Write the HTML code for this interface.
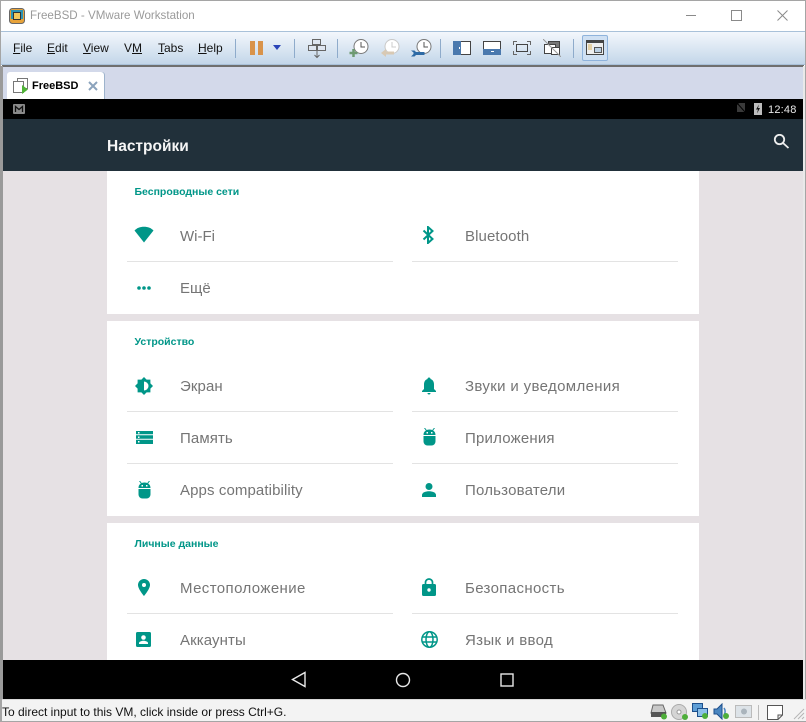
<!DOCTYPE html>
<html><head><meta charset="utf-8"><style>
html,body{margin:0;padding:0;background:#fff}
#r{position:relative;width:806px;height:722px;overflow:hidden;background:#fff;font-family:"Liberation Sans",sans-serif}
#r div,#r svg,#r span.a{position:absolute}
.m{top:41px;font-size:12px;color:#111;line-height:14px;white-space:nowrap}
.m u{text-decoration:underline}
.s{top:39px;width:1px;height:19px;background:#8eabcb}
.h{left:134.5px;font-size:10.5px;font-weight:bold;color:#009688;line-height:14px;white-space:nowrap;letter-spacing:0}
.t{font-size:15px;color:#757575;line-height:18px;white-space:nowrap;letter-spacing:.35px}
.l{height:1px;background:#e3e3e3}
.c{background:#fff;left:107px;width:592px}
</style></head><body><div id="r">
<!-- window frame -->
<div style="left:0;top:0;width:806px;height:1px;background:#a5a5a5"></div>
<div style="left:0;top:0;width:1px;height:722px;background:#a5a5a5"></div>
<div style="right:0;top:0;width:1px;height:722px;background:#a5a5a5"></div>

<!-- title bar -->
<svg style="left:9px;top:8px" width="16" height="16" viewBox="0 0 16 16"><rect x="0.5" y="0.5" width="15" height="15" rx="3" fill="#e8a33a" stroke="#666"/><path d="M2 2h12v9H2z" fill="#2b93b5"/><rect x="4.500" y="4.500" width="7" height="7" fill="#f2c75c" stroke="#333"/></svg>
<div style="left:30px;top:8px;font-size:11.600px;line-height:16px;color:#9a9a9a;white-space:nowrap">FreeBSD - VMware Workstation</div>
<div style="left:686px;top:15px;width:10px;height:1px;background:#8a8a8a"></div>
<div style="left:731px;top:10px;width:9px;height:9px;border:1px solid #8a8a8a"></div>
<svg style="left:777px;top:10px" width="11" height="11" viewBox="0 0 11 11"><path d="M.5.500l10 10M10.500.500l-10 10" stroke="#8a8a8a" stroke-width="1" fill="none"/></svg>

<!-- toolbar -->
<div style="left:1px;top:31px;width:804px;height:1px;background:#a9c1d9"></div>
<div style="left:1px;top:32px;width:804px;height:32px;background:linear-gradient(#f3f7fc,#c3d6e9)"></div>
<div style="left:1px;top:64px;width:804px;height:1px;background:#a9c1d9"></div>
<div style="left:2px;top:65px;width:802px;height:2px;background:#6f6f6f"></div>
<div class="m" style="left:13px"><u>F</u>ile</div>
<div class="m" style="left:47px"><u>E</u>dit</div>
<div class="m" style="left:83px"><u>V</u>iew</div>
<div class="m" style="left:124px">V<u>M</u></div>
<div class="m" style="left:158px"><u>T</u>abs</div>
<div class="m" style="left:198px"><u>H</u>elp</div>
<div class="s" style="left:235px"></div>
<div style="left:250px;top:41px;width:5px;height:14px;background:#d9934a"></div>
<div style="left:258px;top:41px;width:5px;height:14px;background:#d9934a"></div>
<svg style="left:273px;top:45px" width="9" height="6"><path d="M0 0h8L4 5z" fill="#2a44b8"/></svg>
<div class="s" style="left:294px"></div>
<svg style="left:307px;top:38px" width="20" height="21" viewBox="0 0 20 21" fill="#dfe6f0" stroke="#666"><rect x="5.500" y="1.500" width="8" height="5"/><rect x="1.500" y="7.500" width="8" height="5"/><rect x="10.500" y="7.500" width="8" height="5"/><path d="M10 13v6M7.500 17l2.500 2.500 2.500-2.500" fill="none"/></svg>
<div class="s" style="left:337px"></div>
<svg style="left:349px;top:38px" width="22" height="20" viewBox="0 0 22 20"><circle cx="12" cy="8.500" r="7" fill="#fff" stroke="#777"/><path d="M12 4v5h4" fill="none" stroke="#555"/><path d="M4.500 11v8M.5 15h8" stroke="#6d9a72" stroke-width="2.500"/></svg>
<svg style="left:380px;top:38px" width="22" height="20" viewBox="0 0 22 20"><circle cx="12" cy="8.500" r="7" fill="#fff" stroke="#c8c8c8"/><path d="M12 4v5h4" fill="none" stroke="#ccc"/><path d="M1 15l5-4v2.500h8v3H6V19z" fill="#d8c9b4"/></svg>
<svg style="left:411px;top:38px" width="23" height="20" viewBox="0 0 23 20"><circle cx="13" cy="8.500" r="7" fill="#fff" stroke="#777"/><path d="M13 4v5h4" fill="none" stroke="#555"/><path d="M0 12.500h3.500l1.500 1.500h8.500v3H5l-1.500 1.500H0l2.500-2.500v-1.500z" fill="#2d6aa5"/></svg>
<div class="s" style="left:440px"></div>
<svg style="left:453px;top:41px" width="18" height="14"><rect x=".5" y=".5" width="17" height="13" fill="#fff" stroke="#444"/><rect width="8" height="14" fill="#4a79ae"/><rect x="6" y="6" width="1" height="2" fill="#fff"/></svg>
<svg style="left:483px;top:41px" width="18" height="14"><rect x=".5" y=".5" width="17" height="13" fill="#fff" stroke="#444"/><rect y="8" width="18" height="6" fill="#4a79ae"/><rect x="8" y="10" width="3" height="1" fill="#fff"/></svg>
<svg style="left:513px;top:41px" width="18" height="14" fill="none" stroke="#666"><rect x="3.500" y="3.500" width="11" height="7" stroke="#444"/><path d="M.5 4V.5H4M14 .5h3.500V4M17.500 10v3.500H14M4 13.500H.5V10"/></svg>
<svg style="left:543px;top:39px" width="18" height="18" fill="#fff" stroke="#444"><rect x="5.500" y="2.500" width="11" height="9" fill="#777"/><rect x="1.500" y="5.500" width="11" height="9"/><rect x="8.500" y="8.500" width="8" height="7"/><path d="M0 0l18 18" stroke="#999"/></svg>
<div class="s" style="left:573px"></div>
<div style="left:582px;top:35px;width:24px;height:24px;border:1px solid #8fb3dc;border-radius:2px;background:#cfe0f3"></div>
<svg style="left:586px;top:40px" width="18" height="15"><rect x=".5" y=".5" width="17" height="14" fill="#eee" stroke="#444"/><rect width="18" height="3" fill="#444"/><path d="M2 5h4M2 7h4M2 9h4" stroke="#d9b25c"/><rect x="8.500" y="7.500" width="7" height="5" fill="#bcd0e4" stroke="#555"/></svg>

<!-- tab bar -->
<div style="left:2px;top:67px;width:802px;height:32px;background:#d3d9ea"></div>
<div style="left:0;top:66px;width:3px;height:656px;background:#9a9a9a"></div>
<div style="left:803px;top:66px;width:2px;height:633px;background:#e9e9e9"></div>
<div style="left:7px;top:72px;width:97px;height:27px;background:#fff;border-radius:3px 3px 0 0;box-shadow:1px 0 0 #9db3cc"></div>
<svg style="left:12px;top:77px" width="17" height="18" fill="#fff" stroke="#777"><rect x="5.500" y="1.500" width="10" height="10"/><rect x="1.500" y="4.500" width="10" height="11"/><path d="M10 8l6 4.500-6 4.500z" fill="#50b337" stroke="none"/></svg>
<div style="left:32px;top:78.500px;font-size:11px;font-weight:bold;line-height:15px;color:#000;white-space:nowrap">FreeBSD</div>
<svg style="left:88px;top:81px" width="10" height="10"><path d="M1 1l8 8M9 1l-8 8" stroke="#8ba3bc" stroke-width="2"/></svg>

<!-- android status bar -->
<div style="left:3px;top:99px;width:800px;height:20px;background:#000"></div>
<svg style="left:13px;top:104px" width="12" height="10"><rect width="12" height="10" rx="1" fill="#8a8a8a"/><path d="M2.500 8V2.500L6 5.500l3.500-3V8" fill="none" stroke="#111" stroke-width="1.300"/></svg>
<svg style="left:737px;top:103px" width="8" height="9"><path d="M0 2l2-2h6v9H0z" fill="#3a3a3a"/><path d="M0 0l8 9" stroke="#000"/></svg>
<div style="left:754px;top:103px;width:8px;height:12px;background:#bdbdbd"></div>
<svg style="left:754px;top:103px" width="8" height="12"><path d="M5 1.500L2 6.500h2L3 10.500l3-5.500H4z" fill="#111"/></svg>
<div style="left:768px;top:102.500px;font-size:11px;line-height:14px;color:#e8e8e8;white-space:nowrap;letter-spacing:.2px">12:48</div>

<!-- app bar -->
<div style="left:3px;top:119px;width:800px;height:52px;background:#21303a"></div>
<div style="left:107px;top:137px;font-size:15.500px;font-weight:bold;line-height:19px;color:#f5f5f5;white-space:nowrap">Настройки</div>
<svg style="left:773px;top:134px" width="17" height="16" fill="none" stroke="#eee" stroke-width="1.800"><circle cx="6.500" cy="5.500" r="4.700"/><path d="M10 9l5.500 5"/></svg>

<!-- content -->
<div style="left:3px;top:171px;width:800px;height:489px;background:#e6e1e4"></div>
<div class="c" style="top:171px;height:143px"></div>
<div class="c" style="top:321px;height:195px"></div>
<div class="c" style="top:523px;height:137px"></div>

<div class="h" style="top:185px">Беспроводные сети</div>
<div class="h" style="top:335px">Устройство</div>
<div class="h" style="top:537px">Личные данные</div>

<div class="l" style="left:127px;top:261px;width:266px"></div>
<div class="l" style="left:412px;top:261px;width:266px"></div>
<div class="l" style="left:127px;top:411px;width:266px"></div>
<div class="l" style="left:412px;top:411px;width:266px"></div>
<div class="l" style="left:127px;top:463px;width:266px"></div>
<div class="l" style="left:412px;top:463px;width:266px"></div>
<div class="l" style="left:127px;top:613px;width:266px"></div>
<div class="l" style="left:412px;top:613px;width:266px"></div>

<div class="t" style="left:180px;top:228px;letter-spacing:0">Wi-Fi</div>
<div class="t" style="left:465px;top:228px;letter-spacing:.1px">Bluetooth</div>
<div class="t" style="left:180px;top:280px;letter-spacing:0">Ещё</div>
<div class="t" style="left:180px;top:378px;letter-spacing:.1px">Экран</div>
<div class="t" style="left:465px;top:378px">Звуки и уведомления</div>
<div class="t" style="left:180px;top:430px;letter-spacing:.1px">Память</div>
<div class="t" style="left:465px;top:430px;letter-spacing:.2px">Приложения</div>
<div class="t" style="left:180px;top:482px;letter-spacing:.1px">Apps compatibility</div>
<div class="t" style="left:465px;top:482px;letter-spacing:.2px">Пользователи</div>
<div class="t" style="left:180px;top:580px;letter-spacing:.4px">Местоположение</div>
<div class="t" style="left:465px;top:580px">Безопасность</div>
<div class="t" style="left:180px;top:632px;letter-spacing:.1px">Аккаунты</div>
<div class="t" style="left:465px;top:632px">Язык и ввод</div>

<!-- icons -->
<svg style="left:134px;top:226px" width="20" height="17" viewBox="0 0 20 17"><path d="M.5 4.500C3 2 6.300.8 10 .8s7 1.200 9.500 3.700L10 16.500z" fill="#009688"/></svg>
<svg style="left:422px;top:226px" width="13" height="18" viewBox="0 0 13 18" fill="none" stroke="#009688" stroke-width="2"><path d="M1.500 4.500l9 8.500-4.500 4V1l4.500 4-9 8.500"/></svg>
<svg style="left:137px;top:286px" width="14" height="4"><circle cx="2" cy="2" r="1.800" fill="#009688"/><circle cx="7" cy="2" r="1.800" fill="#009688"/><circle cx="12" cy="2" r="1.800" fill="#009688"/></svg>
<svg style="left:135px;top:377px" width="18" height="18" viewBox="0 0 18 18"><path d="M9 0l2.600 2.600h3.800v3.800L18 9l-2.600 2.600v3.800h-3.800L9 18l-2.600-2.600H2.600v-3.800L0 9l2.600-2.600V2.600h3.800z" fill="#009688"/><path d="M9 4.500a4.500 4.500 0 0 1 0 9z" fill="#fff"/></svg>
<svg style="left:421px;top:377px" width="16" height="18" viewBox="0 0 16 18"><path d="M8 .5c1 0 1.500.7 1.500 1.500C12 2.800 13 5 13 7.500V12l2 2v1H1v-1l2-2V7.500C3 5 4 2.800 6.500 2 6.500 1.200 7 .5 8 .5zM6.500 16h3a1.500 1.500 0 0 1-3 0z" fill="#009688"/></svg>
<svg style="left:136px;top:431px" width="17" height="13" viewBox="0 0 17 13"><rect width="17" height="13" fill="#009688"/><path d="M0 3.700h17M0 8.300h17" stroke="#fff" stroke-width="1"/><path d="M2 1h1.500v1.500H2zM2 5.500h1.500V7H2zM2 10h1.500v1.500H2z" fill="#fff"/></svg>
<svg style="left:423px;top:428px" width="13" height="18" viewBox="0 0 13 18"><path d="M1.500 0l2 2.500M11.500 0l-2 2.500" stroke="#009688"/><path d="M.5 7C.5 3.500 3 1.500 6.500 1.500S12.500 3.500 12.500 7zM.5 8h12v5.500a4 4 0 0 1-4 4h-4a4 4 0 0 1-4-4z" fill="#009688"/><rect x="3.500" y="4" width="1.500" height="1.500" fill="#fff"/><rect x="8" y="4" width="1.500" height="1.500" fill="#fff"/></svg>
<svg style="left:138px;top:481px" width="13" height="18" viewBox="0 0 13 18"><path d="M1.500 0l2 2.500M11.500 0l-2 2.500" stroke="#009688"/><path d="M.5 7C.5 3.500 3 1.500 6.500 1.500S12.500 3.500 12.500 7zM.5 8h12v5.500a4 4 0 0 1-4 4h-4a4 4 0 0 1-4-4z" fill="#009688"/><rect x="3.500" y="4" width="1.500" height="1.500" fill="#fff"/><rect x="8" y="4" width="1.500" height="1.500" fill="#fff"/></svg>
<svg style="left:422px;top:483px" width="14" height="14" viewBox="0 0 14 14"><circle cx="7" cy="3.500" r="3.500" fill="#009688"/><path d="M0 14v-2c0-2.500 4-3.700 7-3.700s7 1.200 7 3.700v2z" fill="#009688"/></svg>
<svg style="left:138px;top:579px" width="12" height="17" viewBox="0 0 12 17"><path fill-rule="evenodd" d="M6 0a6 6 0 0 1 6 6c0 4-6 11-6 11S0 10 0 6a6 6 0 0 1 6-6zm0 4a2 2 0 1 0 0 4 2 2 0 0 0 0-4z" fill="#009688"/></svg>
<svg style="left:422px;top:578px" width="14" height="18" viewBox="0 0 14 18"><path d="M3.500 7V4.500a3.500 3.500 0 0 1 7 0V7" fill="none" stroke="#009688" stroke-width="1.700"/><rect y="6" width="14" height="12" rx="1.500" fill="#009688"/><circle cx="7" cy="12" r="1.700" fill="#fff"/></svg>
<svg style="left:136px;top:632px" width="15" height="15" viewBox="0 0 15 15"><rect width="15" height="15" rx="1.500" fill="#009688"/><circle cx="7.500" cy="5.500" r="2.300" fill="#fff"/><path d="M3 12v-1c0-1.500 3-2.300 4.500-2.300S12 9.500 12 11v1z" fill="#fff"/></svg>
<svg style="left:421px;top:631px" width="17" height="17" viewBox="0 0 17 17" fill="none" stroke="#009688" stroke-width="1.500"><circle cx="8.500" cy="8.500" r="7.700"/><ellipse cx="8.500" cy="8.500" rx="3.500" ry="7.700"/><path d="M1.500 6h14M1.500 11h14"/></svg>

<!-- nav bar -->
<div style="left:3px;top:660px;width:800px;height:39px;background:#000"></div>
<svg style="left:291px;top:671px" width="15" height="17" fill="none" stroke="#e8e8e8" stroke-width="1.400"><path d="M14 1.500v14L1.500 8.500z"/></svg>
<svg style="left:395px;top:672px" width="16" height="16" fill="none" stroke="#e8e8e8" stroke-width="1.400"><circle cx="8" cy="8" r="6.500"/></svg>
<svg style="left:500px;top:673px" width="14" height="14" fill="none" stroke="#e8e8e8" stroke-width="1.400"><rect x="1" y="1" width="12" height="12"/></svg>

<!-- status bar -->
<div style="left:0;top:699px;width:806px;height:22px;background:#f3f3f3;border-top:1px solid #d8d8d8"></div>
<div style="left:0;top:721px;width:806px;height:1px;background:#a5a5a5"></div>
<div style="left:0;top:699px;width:2px;height:23px;background:#a5a5a5"></div>
<div style="left:2px;top:705px;font-size:12px;line-height:14px;color:#111;white-space:nowrap">To direct input to this VM, click inside or press Ctrl+G.</div>
<svg style="left:650px;top:704px" width="18" height="16"><path d="M3 1h10l3 8H1z" fill="#c8c8c8" stroke="#666"/><rect x="1" y="8" width="15" height="5" fill="#555"/><circle cx="14" cy="12.500" r="3" fill="#4eae3a"/></svg>
<svg style="left:671px;top:704px" width="18" height="17"><circle cx="8" cy="8" r="7.500" fill="#d5d5d5" stroke="#aaa"/><circle cx="8" cy="8" r="2" fill="#fff" stroke="#999"/><circle cx="14" cy="13" r="3" fill="#4eae3a"/></svg>
<svg style="left:692px;top:703px" width="18" height="17"><rect x=".5" y=".5" width="10" height="8" fill="#5e9ed6" stroke="#1d4f8c"/><rect x="5.500" y="5.500" width="10" height="8" fill="#8cc0e8" stroke="#1d4f8c"/><circle cx="13" cy="13" r="3" fill="#4eae3a"/></svg>
<svg style="left:713px;top:703px" width="18" height="17"><path d="M1 6h3l5-5v15l-5-5H1z" fill="#4a86c0" stroke="#1d4f8c"/><path d="M11 5c1.500 2 1.500 5 0 7" fill="none" stroke="#4a86c0" stroke-width="1.500"/><circle cx="13" cy="13" r="3" fill="#4eae3a"/></svg>
<svg style="left:735px;top:705px" width="17" height="13"><rect x=".5" y=".5" width="16" height="12" fill="#dde3e8" stroke="#bbb"/><circle cx="9" cy="6.500" r="3" fill="#aab4bc"/></svg>
<div style="left:758px;top:705px;width:1px;height:15px;background:#bbb"></div>
<svg style="left:767px;top:705px" width="16" height="15"><path d="M.5.500h15V10l-4.500 4.500H.5zM15.500 10H11v4.500" fill="#fff" stroke="#555"/></svg>
<svg style="left:792px;top:707px" width="13" height="13" stroke="#b5b5b5"><path d="M12 2L2 12M12 6l-6 6M12 10l-2 2"/></svg>
</div></body></html>
